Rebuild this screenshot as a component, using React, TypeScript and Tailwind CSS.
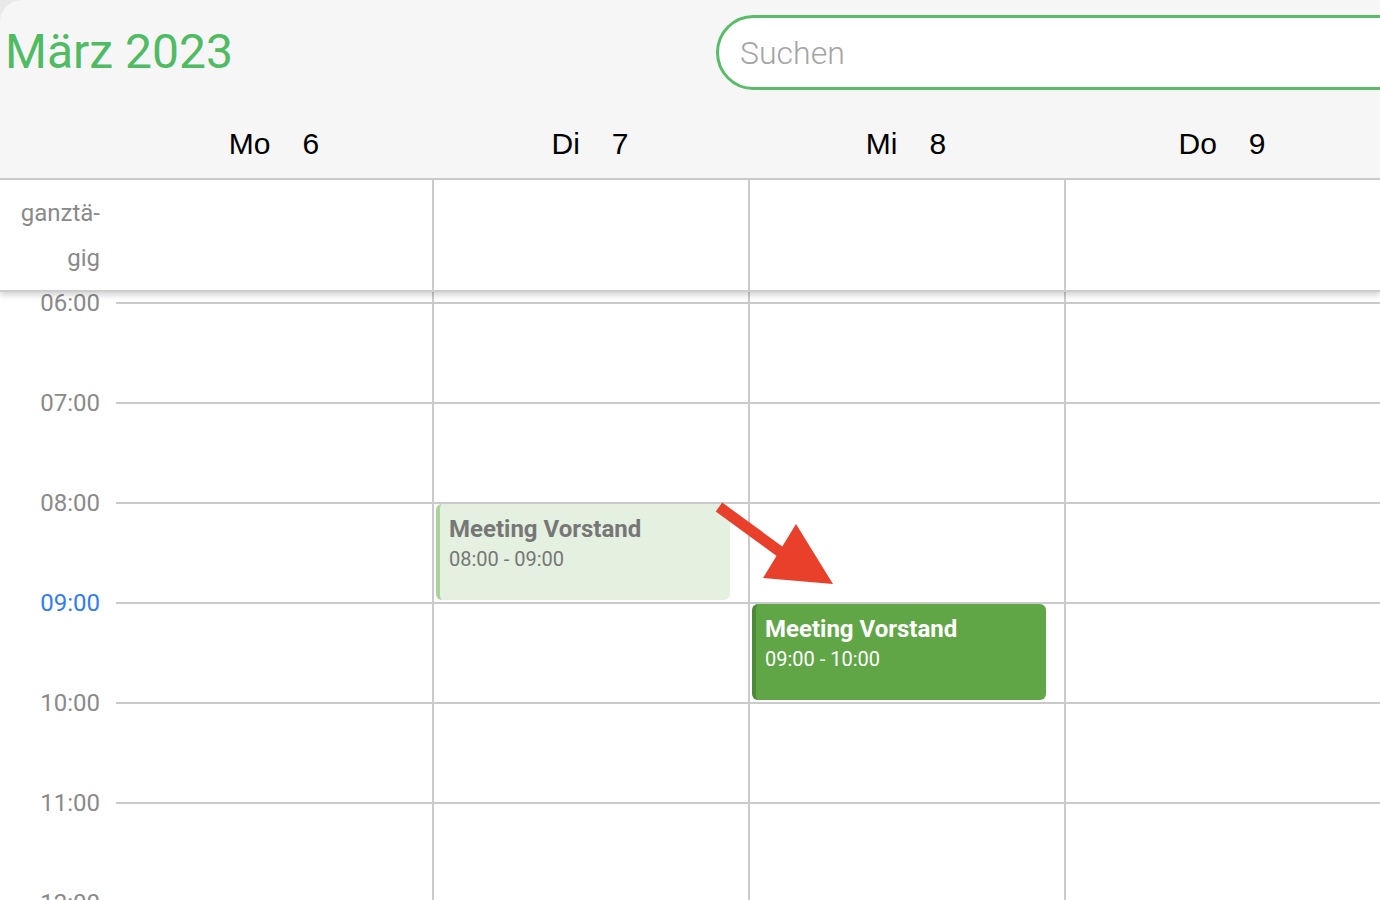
const days = [
  { name: 'Mo', num: 6 },
  { name: 'Di', num: 7 },
  { name: 'Mi', num: 8 },
  { name: 'Do', num: 9 },
];

const hours = ['06:00', '07:00', '08:00', '09:00', '10:00', '11:00', '12:00'];

type CalEvent = { day: number; hour: string; title: string; time: string; ghost?: boolean };

const events: CalEvent[] = [
  { day: 1, hour: '08:00', title: 'Meeting Vorstand', time: '08:00 - 09:00', ghost: true },
  { day: 2, hour: '09:00', title: 'Meeting Vorstand', time: '09:00 - 10:00' },
];

function EventCard({ ev }: { ev: CalEvent }) {
  return (
    <div
      className={`absolute top-0 left-[2px] z-10 w-[294px] h-[96px] rounded-[6px] border-l-4 pl-[9px] pt-[10px] ${
        ev.ghost ? 'bg-[#e4f0e0] border-[#a8d39a] text-[#777777]' : 'bg-[#61a646] border-[#4b8a37] text-white'
      }`}
    >
      <div className="text-[24px] font-bold leading-[30px]">{ev.title}</div>
      <div className="text-[20px] leading-[30px]">{ev.time}</div>
    </div>
  );
}

export default function App() {
  return (
    <div className="relative w-[1380px] h-[900px] overflow-hidden bg-[#e9e9e9] font-['Roboto',sans-serif]">
      {/* header */}
      <header className="h-[180px] bg-[#f6f6f6] rounded-tl-[22px] border-b-2 border-[#cdcdcd]">
        <div className="flex h-[110px]">
          <div className="w-[716px] pl-[5px] pt-[28px]">
            <h1 className="text-[48px] leading-none text-[#4fbb63]">März 2023</h1>
          </div>
          <div className="flex-1 -mr-[60px] mt-[15px] h-[75px] rounded-full border-[3px] border-[#58bc69] bg-white flex items-center pl-[21px]">
            <span className="text-[32px] font-light text-[#a4a4a4]">Suchen</span>
          </div>
        </div>
        <div className="flex h-[66px] pl-[116px] font-['Liberation_Sans',sans-serif] text-[30px] text-black">
          {days.map(d => (
            <div key={d.name} className="w-[316px] flex items-center justify-center gap-[32px]">
              <span>{d.name}</span>
              <span>{d.num}</span>
            </div>
          ))}
        </div>
      </header>

      {/* all-day row */}
      <div className="relative z-20 flex h-[112px] bg-white border-b-2 border-[#cdcdcd] shadow-[0_3px_6px_rgba(0,0,0,0.18)]">
        <div className="w-[116px] pr-[16px] pt-[11px] text-right text-[24px] leading-[45px] text-[#8a8a8a]">
          ganztä-
          <br />
          gig
        </div>
        {days.map((d, i) => (
          <div key={d.name} className={`w-[316px] ${i > 0 ? 'border-l-2 border-[#cacaca]' : ''}`} />
        ))}
      </div>

      {/* time grid */}
      <div className="flex bg-white h-[620px]">
        <div className="w-[116px] text-[24px] text-[#8a8a8a]">
          <div className="h-[10px]" />
          {hours.map(h => (
            <div key={h} className="relative h-[100px]">
              <span className={`absolute right-[16px] -top-[11px] leading-none ${h === '09:00' ? 'text-[#2f7cf5]' : ''}`}>
                {h}
              </span>
            </div>
          ))}
        </div>
        {days.map((d, i) => (
          <div key={d.name} className={`w-[316px] ${i > 0 ? 'border-l-2 border-[#cacaca]' : ''}`}>
            <div className="h-[10px]" />
            {hours.map(h => {
              const ev = events.find(e => e.day === i && e.hour === h);
              return (
                <div key={h} className="relative h-[100px] border-t-2 border-[#cacaca]">
                  {ev && <EventCard ev={ev} />}
                </div>
              );
            })}
          </div>
        ))}
      </div>

      {/* annotation arrow */}
      <svg className="absolute left-0 top-0 z-30 pointer-events-none" width="1380" height="900">
        <line x1="719" y1="507" x2="786" y2="556" stroke="#e8402a" strokeWidth="11" />
        <polygon points="796,524 763,578 833,584" fill="#e8402a" />
      </svg>
    </div>
  );
}
